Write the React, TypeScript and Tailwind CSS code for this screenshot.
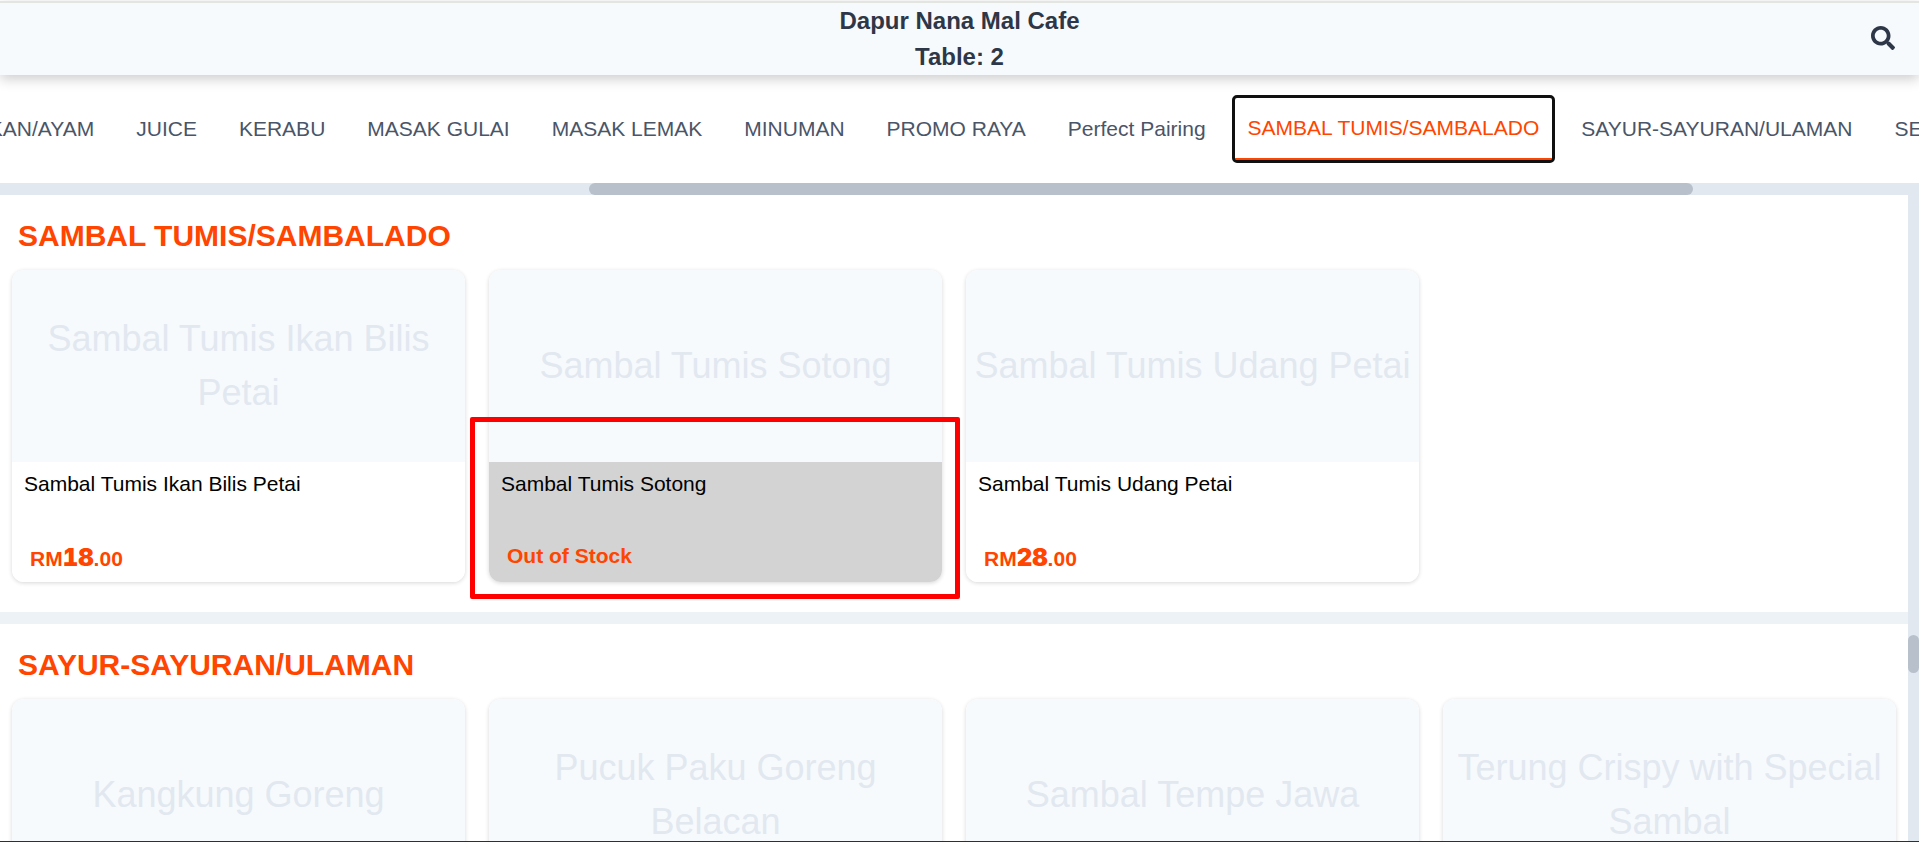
import { FaSearch } from "react-icons/fa";

type MenuItem = {
  name: string;
  ringgit?: string;
  sen?: string;
  outOfStock?: boolean;
  highlighted?: boolean;
};

type MenuSection = {
  title: string;
  items: MenuItem[];
};

const categories = [
  "IKAN/AYAM",
  "JUICE",
  "KERABU",
  "MASAK GULAI",
  "MASAK LEMAK",
  "MINUMAN",
  "PROMO RAYA",
  "Perfect Pairing",
  "SAMBAL TUMIS/SAMBALADO",
  "SAYUR-SAYURAN/ULAMAN",
  "SET",
];

const activeCategory = "SAMBAL TUMIS/SAMBALADO";

const sections: MenuSection[] = [
  {
    title: "SAMBAL TUMIS/SAMBALADO",
    items: [
      { name: "Sambal Tumis Ikan Bilis Petai", ringgit: "18", sen: "00" },
      { name: "Sambal Tumis Sotong", outOfStock: true, highlighted: true },
      { name: "Sambal Tumis Udang Petai", ringgit: "28", sen: "00" },
    ],
  },
  {
    title: "SAYUR-SAYURAN/ULAMAN",
    items: [
      { name: "Kangkung Goreng" },
      { name: "Pucuk Paku Goreng Belacan" },
      { name: "Sambal Tempe Jawa" },
      { name: "Terung Crispy with Special Sambal" },
    ],
  },
];

function Header() {
  return (
    <header className="relative z-10 mt-px grid shrink-0 grid-cols-[1fr_auto_1fr] items-center border-t-2 border-[#e3e5e1] bg-[#f7fafc] text-[#2d3748] shadow-[0_4px_12px_rgba(0,0,0,0.2)]">
      <h1 className="col-start-2 text-center text-2xl leading-9 font-bold">
        Dapur Nana Mal Cafe
        <br />
        Table: 2
      </h1>
      <button type="button" aria-label="Search" className="mr-6 mb-0.5 justify-self-end">
        <FaSearch className="size-6" />
      </button>
    </header>
  );
}

function CategoryNav() {
  return (
    <nav className="shrink-0 overflow-hidden">
      <div className="flex h-[108px] items-center">
        <div className="-ml-[38px] flex items-center">
          {categories.map((category) => (
            <button
              key={category}
              type="button"
              className={
                category === activeCategory
                  ? "mx-2 h-[62px] shrink-0 rounded-xs border-b-2 border-[#ff4500] px-[13px] text-[21px] whitespace-nowrap text-[#ff4500] outline-3 outline-[#101010]"
                  : "mx-2 h-[62px] shrink-0 px-[13px] text-[21px] whitespace-nowrap text-[#4a5568]"
              }
            >
              {category}
            </button>
          ))}
        </div>
      </div>
      <div className="flex h-3 bg-[#e2e8f0]">
        <div className="ml-[30.7%] w-[57.5%] rounded-md bg-[#b8c0cc]" />
      </div>
    </nav>
  );
}

function Price({ ringgit, sen }: { ringgit: string; sen: string }) {
  return (
    <p className="h-9 px-[18px] text-[21px] leading-9 font-bold text-[#ff4500]">
      RM
      <span className="font-[Inter,sans-serif] text-2xl leading-9 font-black tabular-nums">
        {ringgit}
      </span>
      .{sen}
    </p>
  );
}

function MenuCard({ item }: { item: MenuItem }) {
  return (
    <article className="relative m-3 rounded-xl shadow-[0_1px_4px_rgba(0,0,0,0.16)]">
      <div className="flex h-48 items-center justify-center rounded-t-xl bg-[#f7fafc] text-center text-4xl leading-[54px] text-[#e2e8f0]">
        {item.name}
      </div>
      <div
        className={`flex h-[120px] flex-col justify-between rounded-b-xl py-1.5 ${
          item.outOfStock ? "bg-[#d3d3d3]" : "bg-white"
        }`}
      >
        <h3 className="px-3 text-[21px] leading-8 text-black">{item.name}</h3>
        {item.outOfStock ? (
          <p className="h-9 px-[18px] text-[21px] leading-8 font-bold text-[#ff4500]">
            Out of Stock
          </p>
        ) : null}
        {item.ringgit && item.sen ? <Price ringgit={item.ringgit} sen={item.sen} /> : null}
      </div>
      {item.highlighted ? (
        <div className="pointer-events-none absolute top-[147px] -right-[18px] -bottom-[17px] -left-[19px] z-10 rounded-xs border-5 border-[#ff0000]" />
      ) : null}
    </article>
  );
}

export default function App() {
  return (
    <div className="flex h-screen flex-col overflow-hidden border-b border-[#25323c] bg-white font-[Liberation_Sans,Arial,sans-serif]">
      <Header />
      <CategoryNav />
      <div className="flex min-h-0 flex-1">
        <main className="min-w-0 flex-1 overflow-hidden">
          {sections.map((section) => (
            <section key={section.title} className="border-b-12 border-[#edf2f7] pb-[18px]">
              <h2 className="px-[18px] pt-[18px] text-3xl leading-[45px] font-bold text-[#ff4500]">
                {section.title}
              </h2>
              <div className="grid grid-cols-4">
                {section.items.map((item) => (
                  <MenuCard key={item.name} item={item} />
                ))}
              </div>
            </section>
          ))}
        </main>
        <div className="w-[11px] shrink-0 bg-[#e2e8f0] pt-[440px]">
          <div className="h-[38px] rounded-md bg-[#b8c0cc]" />
        </div>
      </div>
    </div>
  );
}
